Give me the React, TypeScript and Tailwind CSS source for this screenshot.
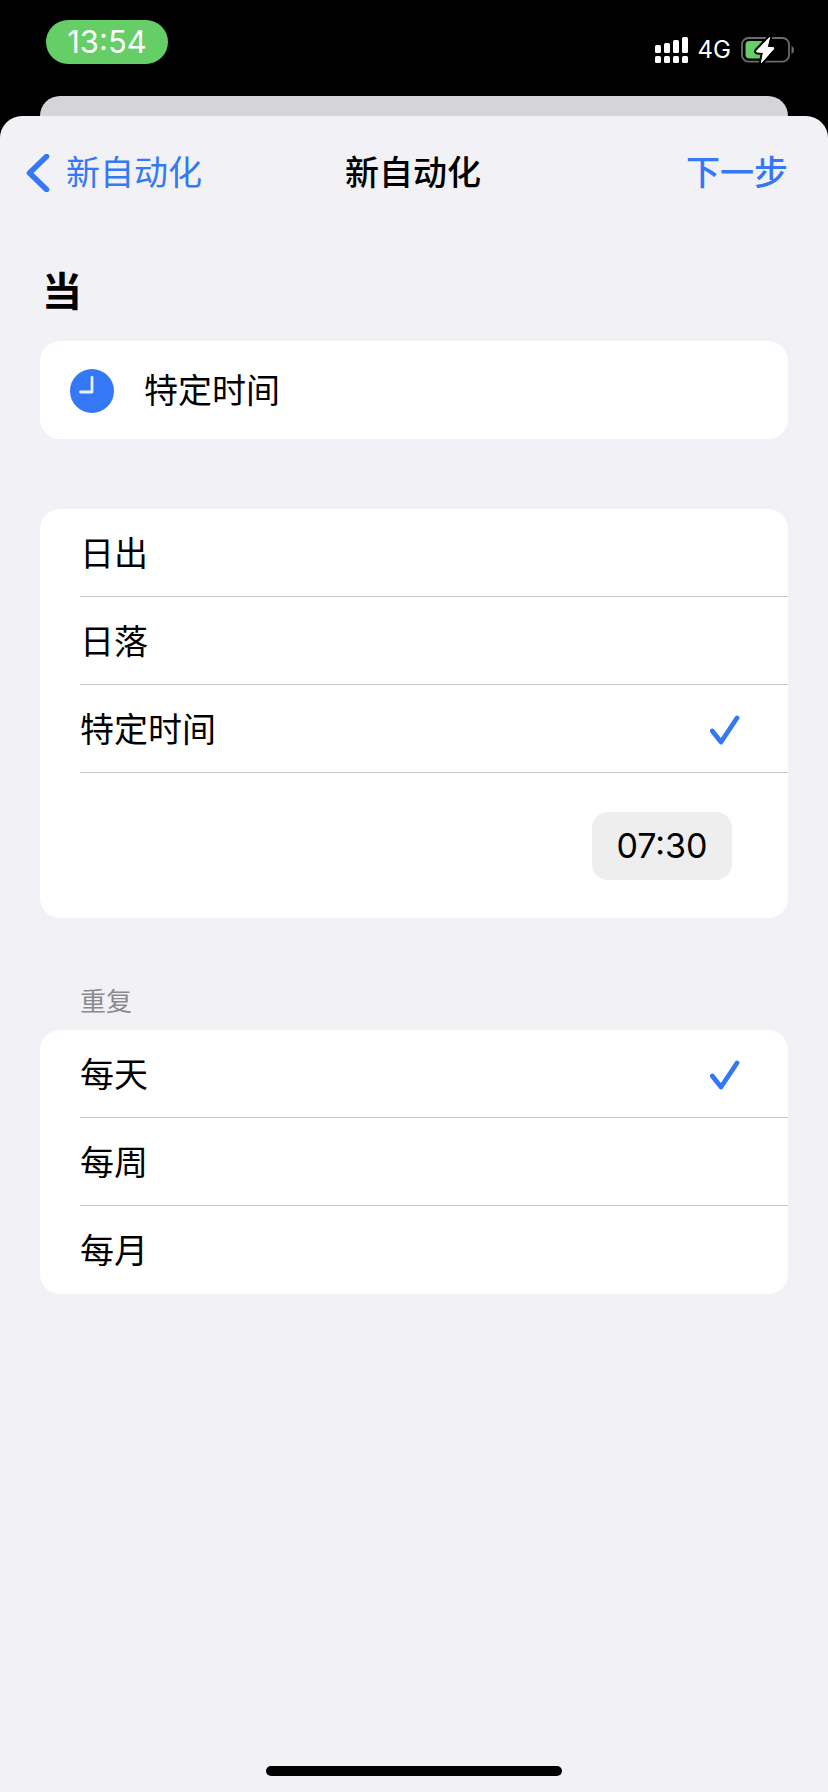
import { useState } from "react";

const WHEN_OPTIONS = ["日出", "日落", "特定时间"];
const REPEAT_OPTIONS = ["每天", "每周", "每月"];

function SignalIcon() {
  return (
    <svg width="33" height="26" viewBox="0 0 33 26" fill="white" aria-hidden="true">
      <rect x="0" y="8" width="6" height="8" rx="1.5" />
      <rect x="9" y="6" width="6" height="10" rx="1.5" />
      <rect x="18" y="3" width="6" height="13" rx="1.5" />
      <rect x="27" y="0" width="6" height="16" rx="1.5" />
      <rect x="0" y="19" width="6" height="7" rx="1.5" />
      <rect x="9" y="19" width="6" height="7" rx="1.5" />
      <rect x="18" y="19" width="6" height="7" rx="1.5" />
      <rect x="27" y="19" width="6" height="7" rx="1.5" />
    </svg>
  );
}

function BatteryIcon() {
  return (
    <svg width="53" height="28" viewBox="0 0 53 28" aria-hidden="true">
      <rect x="1" y="2" width="47" height="23.6" rx="6.5" fill="none" stroke="#6b6b6b" strokeWidth="1.8" />
      <path d="M50.5 10v8c3.3-1.2 3.3-6.8 0-8z" fill="#6b6b6b" />
      <path d="M8.5 5h12.500v17.600h-12.500a4 4 0 0 1-4-4v-9.600a4 4 0 0 1 4-4z" fill="#65ce66" />
      <path
        d="M28.600 1.500L15.800 14.800q-.6 1.200.6 1.300l6 .3l-2 10.300l12.200-13.800q.7-1.200-.6-1.300l-5.800-.3z"
        fill="white"
        stroke="black"
        strokeWidth="5"
        strokeLinejoin="round"
        paintOrder="stroke"
      />
      <path
        d="M28.600 1.500L15.800 14.800q-.6 1.200.6 1.300l6 .3l-2 10.300l12.200-13.800q.7-1.200-.6-1.300l-5.800-.3z"
        fill="white"
        stroke="white"
        strokeWidth="1"
        strokeLinejoin="round"
      />
    </svg>
  );
}

function ChevronIcon() {
  return (
    <svg width="24" height="38" viewBox="0 0 24 38" fill="none" aria-hidden="true">
      <path d="M20.5 2.5L3.5 19l17 16.500" stroke="#3478f6" strokeWidth="5.5" strokeLinecap="round" strokeLinejoin="round" />
    </svg>
  );
}

function ClockIcon() {
  return (
    <svg width="44" height="44" viewBox="0 0 44 44" fill="none" aria-hidden="true">
      <circle cx="22" cy="22" r="22" fill="#3478f6" />
      <path d="M22 8.300V23H10.500" stroke="#e9f1ff" strokeWidth="2.800" strokeLinecap="round" strokeLinejoin="round" />
    </svg>
  );
}

function CheckIcon() {
  return (
    <svg width="30" height="30" viewBox="0 0 30 30" fill="none" aria-hidden="true">
      <path d="M2.300 16L11 27L27 3" stroke="#3478f6" strokeWidth="4.800" strokeLinecap="round" strokeLinejoin="round" />
    </svg>
  );
}

type OptionRowProps = {
  group: string;
  label: string;
  checked: boolean;
  divided: boolean;
  onSelect: (label: string) => void;
};

function OptionRow({ group, label, checked, divided, onSelect }: OptionRowProps) {
  return (
    <label
      className={`relative ml-10 flex h-22 cursor-pointer items-center justify-between border-b pt-0.5 pr-12 ${
        divided ? "border-[#c4c4c6]" : "border-transparent"
      }`}
    >
      <input
        type="radio"
        name={group}
        value={label}
        checked={checked}
        onChange={() => onSelect(label)}
        className="sr-only"
      />
      <span>{label}</span>
      {checked && <CheckIcon />}
    </label>
  );
}

export default function App() {
  const [when, setWhen] = useState("特定时间");
  const [repeat, setRepeat] = useState("每天");

  return (
    <div className="flex min-h-screen flex-col bg-black font-['Inter','Noto_Sans_CJK_SC',sans-serif] text-[34px] leading-10 text-black">
      <header className="flex h-24 items-start justify-between pt-5 pr-[34px] pl-[46px] text-white">
        <div className="flex h-11 w-[122px] items-center justify-center rounded-full bg-[#65ce66] text-[31px]">
          13:54
        </div>
        <div className="flex items-center pt-4">
          <SignalIcon />
          <span className="mx-2.5 text-2xl leading-7">4G</span>
          <BatteryIcon />
        </div>
      </header>

      <div className="mx-10 h-5 rounded-t-[20px] bg-[#d5d4d9]" />

      <div className="flex flex-1 flex-col rounded-t-[22px] bg-[#f1f1f6]">
        <nav className="grid h-28 grid-cols-3 items-center pt-0.5 pr-10 pl-[26px] text-[#3478f6]">
          <button type="button" className="flex items-center gap-4 justify-self-start">
            <ChevronIcon />
            新自动化
          </button>
          <h1 className="justify-self-center pl-3 font-medium text-black">新自动化</h1>
          <button type="button" className="justify-self-end font-medium">
            下一步
          </button>
        </nav>

        <main className="flex flex-col px-10">
          <h2 className="mt-11 pl-0.5 text-[40px] font-bold">当</h2>

          <section className="mt-[29px] flex h-[98px] items-center gap-[30px] rounded-[20px] bg-white pt-0.5 pl-[30px]">
            <ClockIcon />
            <span>特定时间</span>
          </section>

          <section className="mt-[70px] overflow-hidden rounded-[20px] bg-white" aria-label="时间">
            {WHEN_OPTIONS.map((option) => (
              <OptionRow
                key={option}
                group="when"
                label={option}
                checked={when === option}
                divided
                onSelect={setWhen}
              />
            ))}
            <div className="flex h-[145px] items-center justify-end pr-14">
              <button type="button" className="flex h-[68px] w-[140px] items-center justify-center rounded-2xl bg-[#eeeeef]">
                07:30
              </button>
            </div>
          </section>

          <h3 className="mt-[71px] pl-10 text-[26px] leading-[26px] text-[#8a8a8e]">重复</h3>

          <section className="mt-[15px] overflow-hidden rounded-[20px] bg-white" aria-label="重复">
            {REPEAT_OPTIONS.map((option, index) => (
              <OptionRow
                key={option}
                group="repeat"
                label={option}
                checked={repeat === option}
                divided={index < REPEAT_OPTIONS.length - 1}
                onSelect={setRepeat}
              />
            ))}
          </section>
        </main>

        <div className="mt-auto flex justify-center pt-10 pb-4">
          <div className="h-2.5 w-[296px] rounded-full bg-black" />
        </div>
      </div>
    </div>
  );
}
